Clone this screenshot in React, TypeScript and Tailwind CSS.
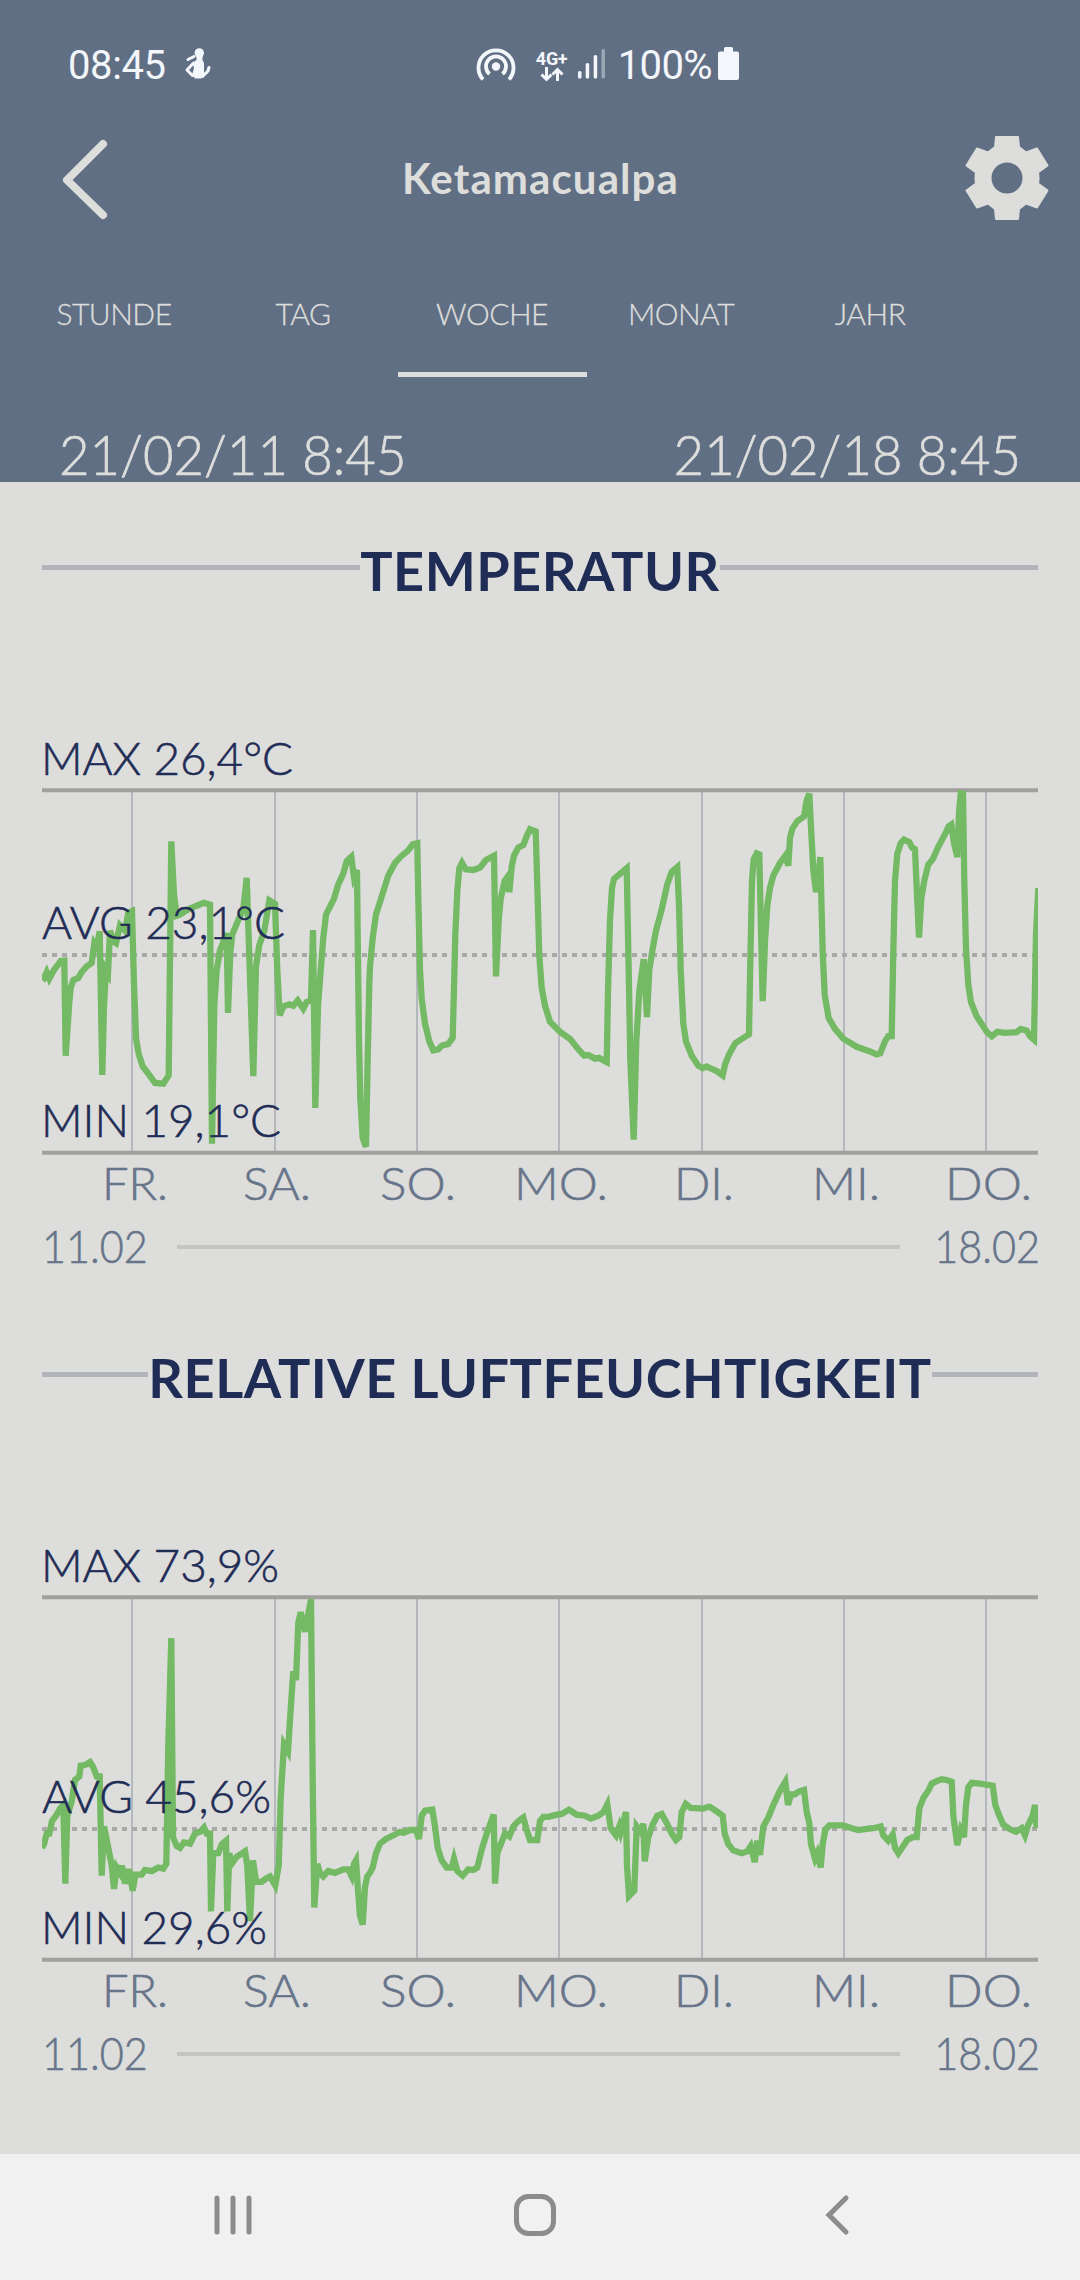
interface Label {
  text: string;
  x: number;
  y: number;
  length: number;
}

interface Series {
  title: string;
  avgY: number;
  lineOffset: number;
  labels: Label[];
  // three recorded stretches, in 1/3 px horizontally and 1/2.8 px vertically
  chunks: string[];
}

const TABS = [
  { label: 'STUNDE', active: false },
  { label: 'TAG', active: false },
  { label: 'WOCHE', active: true },
  { label: 'MONAT', active: false },
  { label: 'JAHR', active: false },
];

const DAYS = [
  { text: 'FR.', line: 90, x: 60, length: 66 },
  { text: 'SA.', line: 233, x: 201, length: 68 },
  { text: 'SO.', line: 375, x: 338, length: 76 },
  { text: 'MO.', line: 517, x: 472, length: 94 },
  { text: 'DI.', line: 660, x: 632, length: 60 },
  { text: 'MI.', line: 802, x: 770, length: 68 },
  { text: 'DO.', line: 944, x: 903, length: 87 },
];

const CHUNK_START = [-12, 328, 668];

const TEMPERATURE: Series = {
  title: 'TEMPERATUR',
  avgY: 235,
  lineOffset: 0,
  labels: [
    { text: 'MAX 26,4°C', x: -1, y: 55, length: 252 },
    { text: 'AVG 23,1°C', x: 0, y: 218.5, length: 243 },
    { text: 'MIN 19,1°C', x: -1, y: 417, length: 240 },
  ],
  chunks: [
    '36,718 42,722 50,706 58,724 72,700 92,675 103,674 107,940 118,790 122,750 130,728 145,722 155,706 170,690 185,680 193,625 200,635 209,592 217,994 222,800 228,700 234,710 240,590 250,620 258,625 270,575 285,590 295,540 306,535 312,740 318,890 326,935 338,970 355,990 375,1016 400,1018 416,995 424,340 432,490 440,548 450,545 475,530 500,520 522,512 540,517 546,1186 553,800 560,700 570,645 590,597 594,820 601,650 607,600 625,560 640,530 650,442 670,997 678,690 688,630 703,590 718,505 735,515 742,700 749,827 760,802 778,796 790,800 803,785 820,808 830,790 843,785 849,588 856,1086 864,800 873,690 880,610 888,545 912,500 925,460 940,430 950,395 964,383 972,440 981,420 983,600 987,900 991,1060 998,1170 1008,1195 1012,1000 1018,740',
    '0,690 8,610 18,545 40,480 55,435 75,400 95,380 115,365 128,348 142,345 145,500 150,700 155,780 165,850 178,900 190,925 205,922 215,912 235,907 248,890 252,750 256,600 262,480 268,415 276,400 287,418 310,420 330,413 348,392 372,380 378,718 386,560 392,500 404,450 412,440 418,482 425,410 432,380 445,357 460,350 470,325 480,306 497,312 503,500 508,660 515,750 525,800 540,845 570,873 600,893 625,922 643,940 655,938 675,948 687,946 710,958 714,760 720,560 726,470 732,445 770,415 776,700 781,950 791,1175 799,900 808,760 821,670 831,832 838,700 848,640 858,590 875,530 892,460 905,425 922,412 927,520 932,700 940,850 948,900 965,940 985,968 998,975 1010,970',
    '0,975 20,983 38,995 45,965 58,935 76,905 117,880 121,680 126,450 131,390 140,373 148,376 152,550 158,787 165,620 172,520 180,470 190,435 210,400 226,380 235,408 240,330 247,305 262,283 282,270 290,225 298,206 303,300 310,420 318,482 325,440 331,384 338,650 344,770 356,835 375,865 400,892 440,915 480,928 500,936 511,933 525,900 535,885 545,885 550,650 555,450 562,375 572,345 582,335 598,342 607,358 615,362 620,470 627,609 634,500 643,450 655,405 668,390 685,355 705,320 716,298 724,293 732,345 742,384 747,260 752,205 759,206 763,450 768,640 775,740 783,790 800,830 830,873 845,886 862,873 885,876 920,874 932,865 950,870 960,885 972,895 978,600 985,470',
  ],
};

const HUMIDITY: Series = {
  title: 'RELATIVE LUFTFEUCHTIGKEIT',
  avgY: 302,
  lineOffset: 3,
  labels: [
    { text: 'MAX 73,9%', x: -1, y: 55, length: 238 },
    { text: 'AVG 45,6%', x: 0, y: 286, length: 229 },
    { text: 'MIN 29,6%', x: -1, y: 417, length: 226 },
  ],
  chunks: [
    '36,890 42,880 50,850 58,850 66,815 78,800 90,780 100,770 106,990 112,800 125,760 135,700 148,690 152,660 165,658 180,650 190,665 200,690 209,690 215,968 222,830 235,890 245,940 252,1005 260,945 270,960 276,940 285,990 297,950 308,1010 316,965 335,965 345,952 365,955 385,945 400,948 409,935 415,600 424,303 429,860 440,885 450,890 462,875 480,878 495,850 510,845 522,833 530,850 540,850 543,1068 550,905 565,905 575,880 588,870 592,1068 598,905 605,935 620,915 645,900 652,940 660,1095 669,925 678,985 695,985 710,975 720,970 736,995 746,940 752,750 762,600 774,620 782,500 790,395 798,420 805,260 812,230 825,285 843,194 848,700 853,1057 862,935 870,960 880,970 895,955 915,960 940,950 955,950 965,970 972,935 978,925 985,1020 990,1080 998,1105 1005,1000 1012,970',
    '0,960 8,945 18,905 30,878 48,865 70,855 90,845 100,848 120,840 138,840 147,865 155,800 165,786 187,783 195,830 203,890 215,925 230,945 245,945 252,920 262,955 278,968 295,950 310,952 322,945 335,895 350,850 371,797 375,990 382,905 392,880 405,850 418,858 430,830 445,815 460,805 470,840 480,868 502,868 510,815 520,803 535,803 560,797 575,795 597,783 620,797 645,800 662,808 685,800 700,790 712,768 722,835 738,855 748,830 752,845 768,790 771,940 777,1025 793,1010 800,830 812,845 820,822 824,928 835,860 848,825 862,800 875,795 890,820 905,850 918,868 928,860 935,790 947,767 962,778 1000,780 1015,775',
    '0,775 20,788 38,800 44,850 55,880 70,897 95,905 112,900 122,885 134,930 142,870 150,910 160,830 175,805 190,770 210,730 226,705 234,770 243,740 255,740 265,733 282,728 290,790 298,820 303,880 315,920 322,905 332,945 338,880 346,840 358,827 400,827 425,835 445,840 470,837 490,835 512,830 520,855 535,870 548,853 555,890 565,905 580,885 592,868 608,860 620,860 628,780 640,750 655,730 665,710 680,703 695,698 710,700 725,705 730,800 742,882 752,840 762,860 768,770 775,720 785,708 810,710 848,716 856,770 868,800 880,825 900,838 918,845 935,835 945,855 955,825 968,800 975,770 980,835',
  ],
};

function toPoints(series: Series) {
  return series.chunks
    .flatMap((chunk, i) =>
      chunk.split(' ').map(pair => {
        const [x, y] = pair.split(',').map(Number);
        return `${(x / 3 + CHUNK_START[i]).toFixed(1)},${(y / 2.8 + series.lineOffset).toFixed(1)}`;
      })
    )
    .join(' ');
}

function StatusBar() {
  return (
    <div className="flex items-center h-[132px] pl-[68px] font-['Roboto',sans-serif] text-[40px] text-[#f3f6fa]">
      <span className="tracking-[-0.4px]">08:45</span>
      <svg width="28" height="32" viewBox="0 0 28 32" className="ml-[17px] -mt-[6px]" fill="none" stroke="currentColor" strokeLinecap="round" strokeLinejoin="round">
        <ellipse cx="16.300" cy="6" rx="4.700" ry="4.800" fill="currentColor" stroke="none" />
        <path d="M13.500 8h6v5l1.500 3v13l-3 2.500h-6L9 28l2-7-1.500-5 4-3z" fill="currentColor" stroke="none" />
        <path d="M5 12.500L11 9.500M10.500 16L4 23l5.500 5.500M26 20.500l-1 3.500-5.500 5.500" strokeWidth="3" />
      </svg>
      <svg width="40" height="34" viewBox="0 0 40 34" className="ml-[265px] -mt-[5px]" fill="none" stroke="currentColor" strokeWidth="3.8">
        <path d="M7 32.500A17.500 17.500 0 1 1 33 32.500" />
        <path d="M13.500 27A10 10 0 1 1 26.500 27" />
        <circle cx="20" cy="19.500" r="4.200" fill="currentColor" stroke="none" />
      </svg>
      <div className="flex flex-col items-center ml-[19px] w-[34px] -mt-[1px]">
        <span className="text-[18px] leading-[17px] font-bold tracking-[-0.3px]">4G+</span>
        <svg width="24" height="15" viewBox="0 0 24 15" fill="none" stroke="currentColor" strokeWidth="3">
          <path d="M6.500 0v12M1.500 7.500l5 5 5-5M17.500 14V2.500M12.500 7.500l5-5 5 5" />
        </svg>
      </div>
      <svg width="28" height="30" viewBox="0 0 28 30" className="ml-[9px] -mt-[4px]" fill="currentColor">
        <rect x="0" y="22" width="3.500" height="7.500" rx="1.500" />
        <rect x="7.700" y="14" width="3.500" height="15.500" rx="1.500" />
        <rect x="15.700" y="6" width="3.500" height="23.500" rx="1.500" />
        <rect x="23.500" y="0" width="3.500" height="29.500" rx="1.500" fill="#9ca7b5" />
      </svg>
      <span className="ml-[12px] tracking-[-0.6px]">100%</span>
      <svg width="21" height="33" viewBox="0 0 21 33" className="ml-[6px] -mt-[5px]" fill="currentColor">
        <path d="M2 4.500h4V1.500q0-1.500 1.500-1.500h6q1.500 0 1.500 1.500v3h4q2 0 2 2V31q0 2-2 2H2q-2 0-2-2V6.500q0-2 2-2z" />
      </svg>
    </div>
  );
}

function Header() {
  return (
    <header className="flex flex-col h-[482px] bg-[#616f85] text-[#dddedb]">
      <StatusBar />
      <div className="grid grid-cols-[1fr_auto_1fr] items-center h-[92px] pl-[60px] pr-[31px]">
        <svg width="50" height="84" viewBox="0 0 50 84" fill="none" stroke="currentColor" strokeWidth="8" strokeLinecap="round" strokeLinejoin="round">
          <path d="M43 8L7 44 43 79" />
        </svg>
        <h1 className="text-[42px] font-bold tracking-[1.1px] pr-[28px]">Ketamacualpa</h1>
        <svg width="84" height="84" viewBox="-42 -42 84 84" className="justify-self-end" fill="currentColor" stroke="currentColor" strokeWidth="2" strokeLinejoin="round">
          <path
            fillRule="evenodd"
            d="M-11-41H11L12-31 19-25.500 30-29.500 40.500-12.500 31-5.500Q32 0 31 5.500L40.500 12.500 30 29.500 19 25.500 12 31 11 41H-11L-12 31-19 25.500-30 29.500-40.500 12.500-31 5.500Q-32 0-31-5.500L-40.500-12.500-30-29.500-19-25.500-12-31ZM0-16.500A16.500 16.500 0 1 0 0 16.500 16.500 16.500 0 1 0 0-16.500Z"
          />
        </svg>
      </div>
      <nav className="flex h-[127px] mt-[26px] pl-[20px]">
        {TABS.map(tab => (
          <button key={tab.label}
            className={`w-[189px] text-[30px] font-light tracking-[-0.5px] pr-[1px] border-y-[5px] border-t-transparent [-webkit-text-stroke:0.3px] ${tab.active ? 'border-b-[#dddedb]' : 'border-b-transparent'}`}>
            {tab.label}
          </button>
        ))}
      </nav>
      <div className="flex justify-between mt-[50px] px-[59px] text-[55px] leading-[54px] font-light [-webkit-text-stroke:0.7px]">
        <span className="origin-left scale-x-[0.957]">21/02/11 8:45</span>
        <span className="origin-right scale-x-[0.957]">21/02/18 8:45</span>
      </div>
    </header>
  );
}

function ChartSection({ series }: { series: Series }) {
  return (
    <section className="flex flex-col px-[42px]">
      <div className="flex items-center h-[64px]">
        <div className="flex-1 h-[5px] -mt-[6px] bg-[#b1b5bb]" />
        <h2 className="text-[54px] font-bold tracking-[0.5px] text-[#1f2c55] whitespace-nowrap">{series.title}</h2>
        <div className="flex-1 h-[5px] -mt-[6px] bg-[#b1b5bb]" />
      </div>

      {/* Chart */}
      <svg width="996" height="490" viewBox="0 0 996 490" className="mt-[118px] font-light text-[46px]">
        {DAYS.map(day => (
          <path key={day.text} d={`M${day.line} 70V433`} stroke="#b4b7bc" strokeWidth="2" />
        ))}
        <path d="M0 70.300H996M0 432.800H996" stroke="#a0a09e" strokeWidth="4" />
        <path d={`M0 ${series.avgY}H996`} stroke="#a9a9a7" strokeWidth="4" strokeDasharray="5 5" />
        <polyline points={toPoints(series)} fill="none" stroke="#74b964" strokeWidth="6.300" />
        {series.labels.map(l => (
          <text key={l.text} x={l.x} y={l.y} textLength={l.length} lengthAdjust="spacingAndGlyphs" fill="#1f2c55" stroke="#1f2c55" strokeWidth="0.6">{l.text}</text>
        ))}
        {DAYS.map(day => (
          <text key={day.text} x={day.x} y="479.500" textLength={day.length} lengthAdjust="spacingAndGlyphs" fill="#67748a" stroke="#67748a" strokeWidth="0.6">{day.text}</text>
        ))}
      </svg>

      {/* Date range */}
      <div className="flex items-center h-[56px] mt-[7px] text-[46px] font-light text-[#67748a] [-webkit-text-stroke:0.6px]">
        <span className="w-[135px] origin-left scale-x-90">11.02</span>
        <div className="w-[723px] h-[4px] mt-[4px] bg-[#c4c4c2]" />
        <span className="flex-1 text-right -mr-[2px] origin-right scale-x-90">18.02</span>
      </div>
    </section>
  );
}

function NavigationBar() {
  return (
    <footer className="flex items-center h-[126px] bg-[#f1f1f1] pl-[214px] pb-[4px] text-[#8c8c8c]">
      <svg width="38" height="42" viewBox="0 0 38 42" fill="none" stroke="currentColor" strokeWidth="5" strokeLinecap="round">
        <path d="M3 4v34M19 4v34M35 4v34" />
      </svg>
      <svg width="42" height="42" viewBox="0 0 42 42" className="ml-[262px]" fill="none" stroke="currentColor" strokeWidth="5">
        <rect x="2.500" y="2.500" width="37" height="37" rx="12" />
      </svg>
      <svg width="26" height="42" viewBox="0 0 26 42" className="ml-[269px]" fill="none" stroke="currentColor" strokeWidth="5" strokeLinecap="round">
        <path d="M21 4L4 21l17 17" />
      </svg>
    </footer>
  );
}

export default function App() {
  return (
    <div className="flex flex-col w-[1080px] h-[2280px] bg-[#dddedb] font-['Lato','Open_Sans',sans-serif]">
      <Header />
      <main className="flex flex-col flex-1 gap-[72px] pt-[56px]">
        <ChartSection series={TEMPERATURE} />
        <ChartSection series={HUMIDITY} />
      </main>
      <NavigationBar />
    </div>
  );
}
